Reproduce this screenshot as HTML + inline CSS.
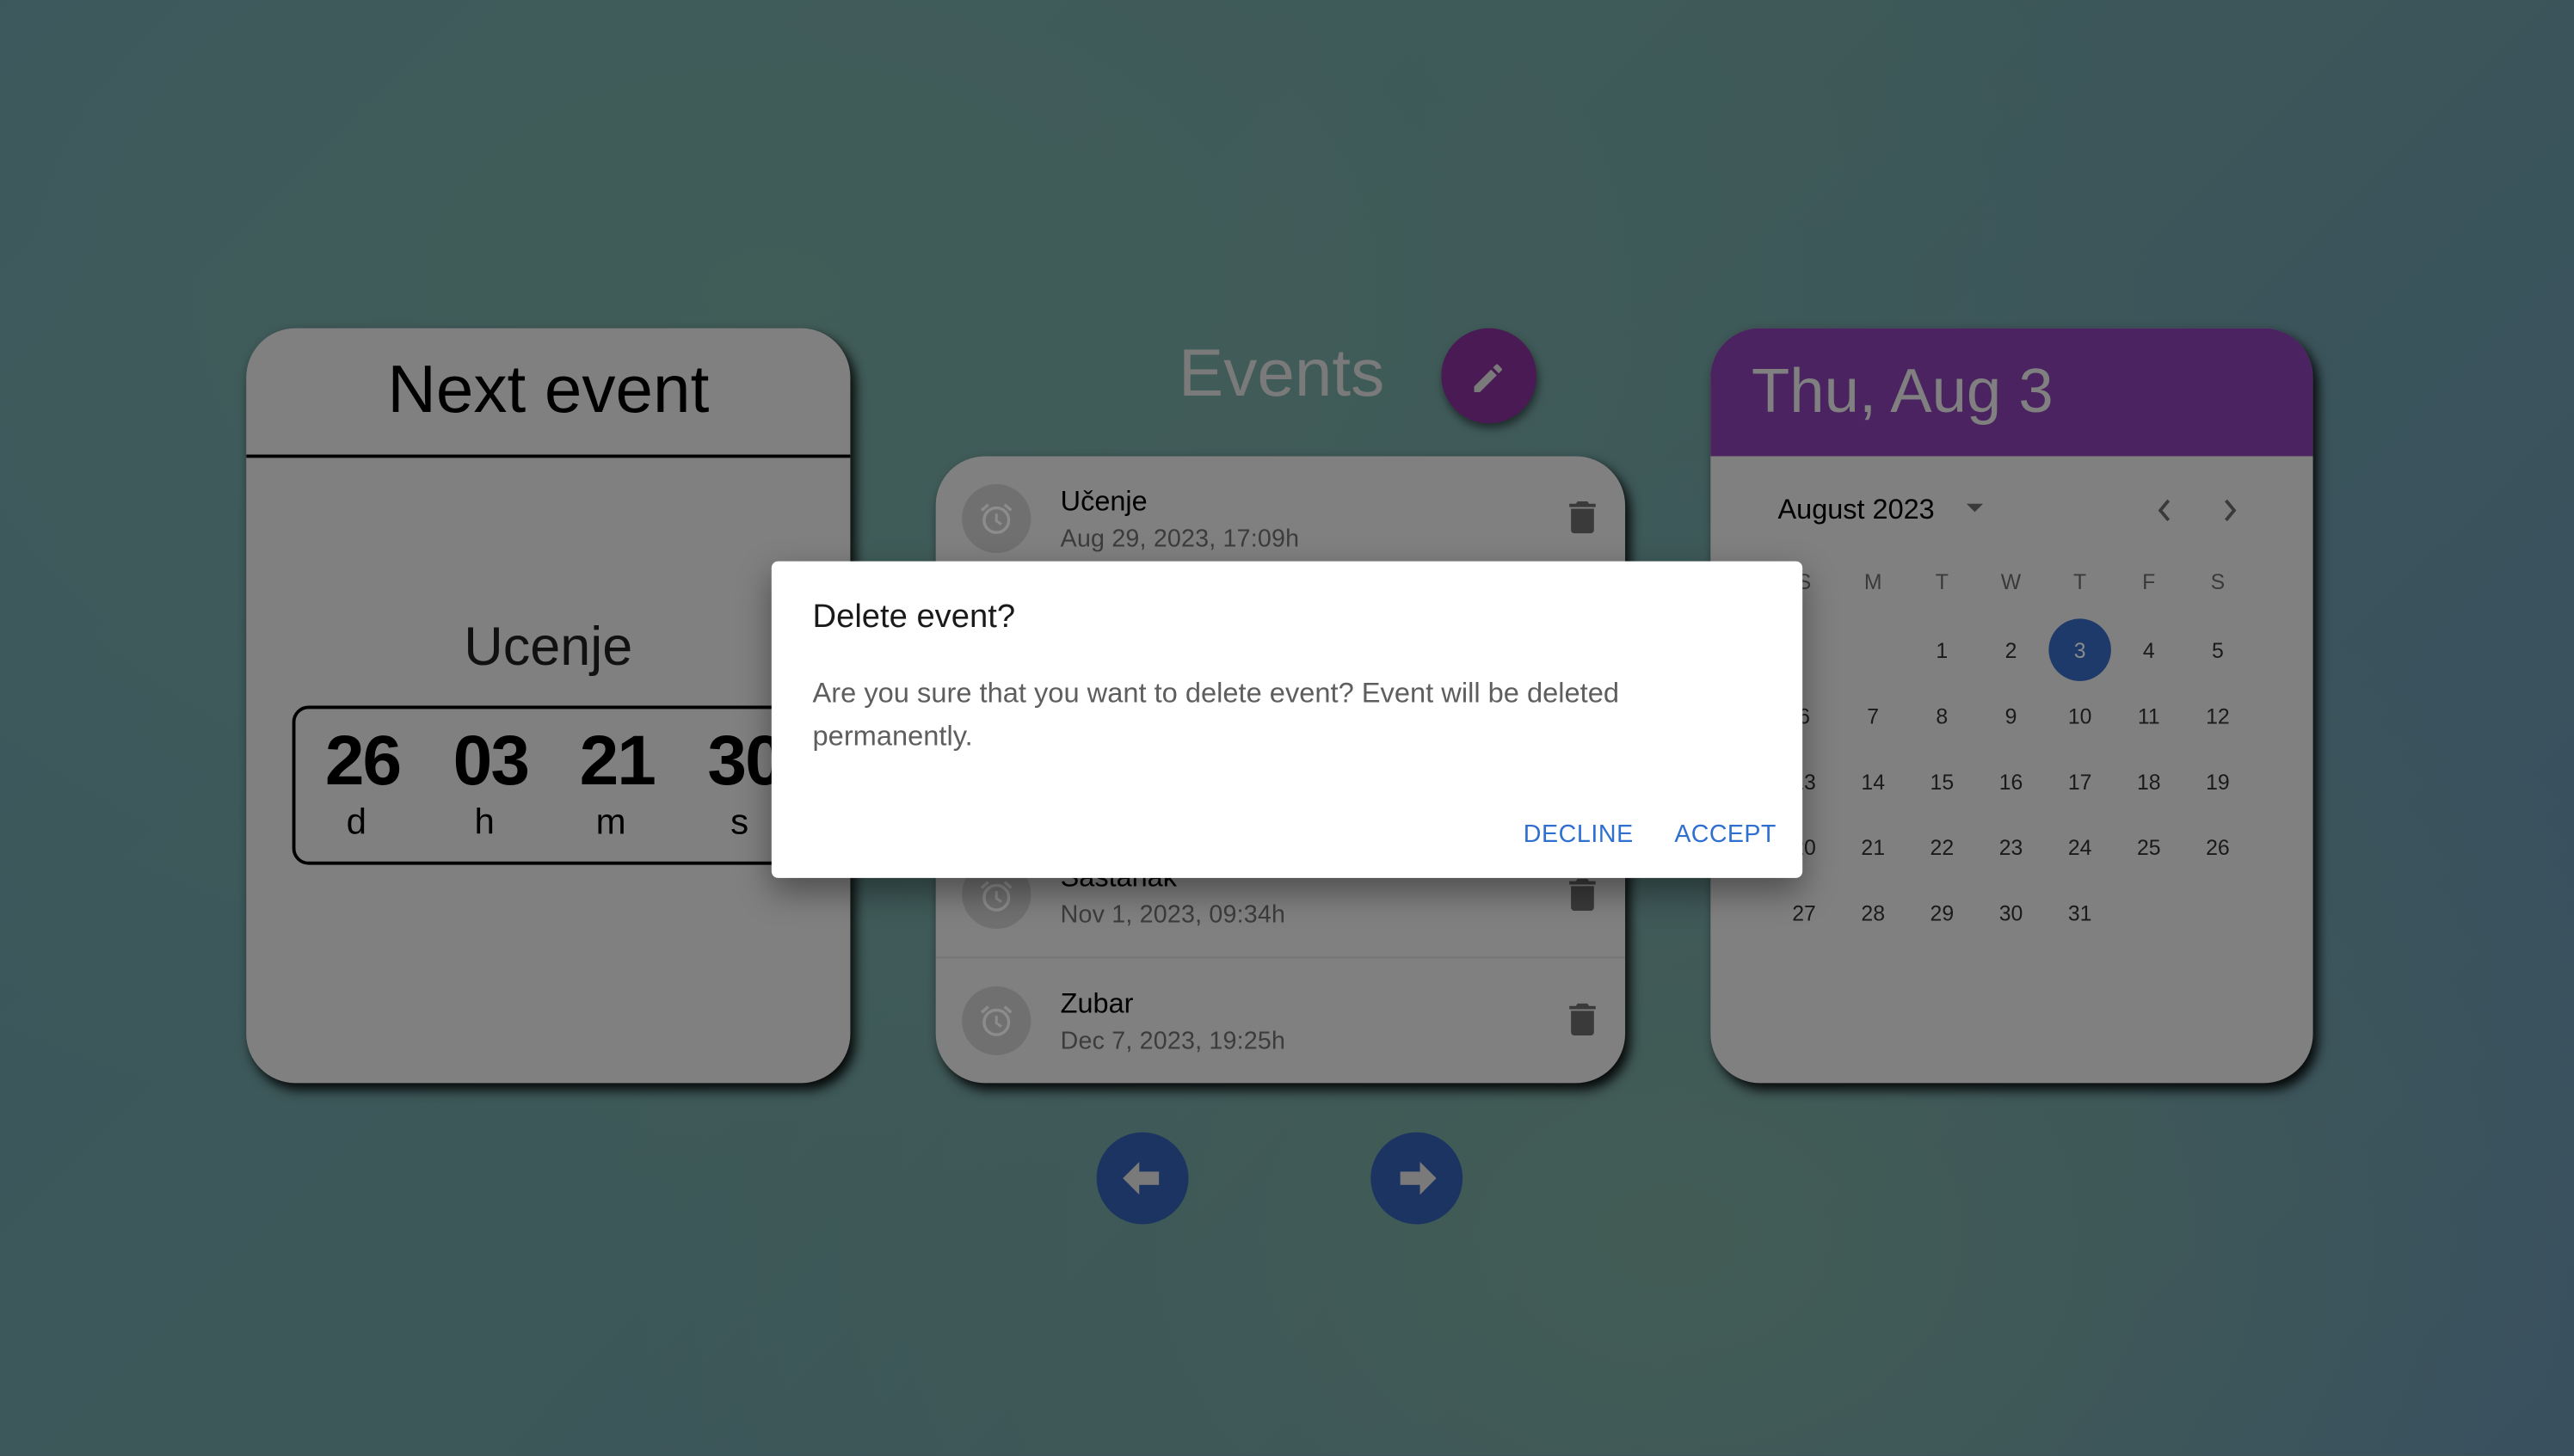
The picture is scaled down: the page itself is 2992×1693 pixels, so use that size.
<!DOCTYPE html>
<html><head><meta charset="utf-8"><style>
html,body{margin:0;padding:0;width:2992px;height:1692px;overflow:hidden;}
body{background:#3d5559;font-family:"Liberation Sans",sans-serif;}
#bg{position:absolute;left:0;top:0;width:2992px;height:1692px;
background:radial-gradient(ellipse at 30% 20%,#415d58 0%,rgba(65,93,88,0) 55%),radial-gradient(ellipse at 65% 85%,#425c55 0%,rgba(66,92,85,0) 45%),linear-gradient(135deg,#3a5660 0%,#3d5858 45%,#374e60 100%);}
#w{position:absolute;left:0;top:0;width:1568px;height:887px;transform:scale(1.90816);transform-origin:0 0;}
.card{position:absolute;background:#808080;border-radius:30px;box-shadow:3px 4px 7px rgba(0,0,0,.9);overflow:hidden;}
.abs{position:absolute;white-space:nowrap;}
.row{position:absolute;left:0;width:420px;height:76px;}
.av{position:absolute;left:16px;top:17px;width:42px;height:42px;border-radius:50%;background:#707070;}
.rt{position:absolute;left:76px;top:18px;font-size:17px;color:#000;}
.rd{position:absolute;left:76px;top:42px;font-size:15px;color:#3c3c3c;letter-spacing:.1px;}
.cal span{position:absolute;width:40px;text-align:center;font-size:13px;color:#1a1a1a;}
</style></head><body><div id="bg"></div>
<div id="w">
<div class="card" style="left:150px;top:200px;width:368px;height:460px;">
 <div class="abs" style="left:0;width:368px;text-align:center;top:14px;font-size:41px;color:#000;">Next event</div>
 <div class="abs" style="left:0;top:77px;width:368px;height:2px;background:#000;"></div>
 <div class="abs" style="left:0;width:368px;text-align:center;top:175px;font-size:33px;color:#111;">Ucenje</div>
 <div class="abs" style="left:28px;top:230px;width:340px;height:93px;border:2px solid #000;border-radius:10px;"></div>
 <div class="abs" style="left:48px;top:240px;font-size:43px;font-weight:bold;color:#000;letter-spacing:-1px;">26</div>
 <div class="abs" style="left:126px;top:240px;font-size:43px;font-weight:bold;color:#000;letter-spacing:-1px;">03</div>
 <div class="abs" style="left:203px;top:240px;font-size:43px;font-weight:bold;color:#000;letter-spacing:-1px;">21</div>
 <div class="abs" style="left:281px;top:240px;font-size:43px;font-weight:bold;color:#000;letter-spacing:-1px;">30</div>
 <div class="abs" style="left:61px;top:288px;font-size:22px;color:#000;">d</div>
 <div class="abs" style="left:139px;top:288px;font-size:22px;color:#000;">h</div>
 <div class="abs" style="left:213px;top:288px;font-size:22px;color:#000;">m</div>
 <div class="abs" style="left:295px;top:288px;font-size:22px;color:#000;">s</div>
</div>
<div class="abs" style="left:718px;top:204px;font-size:41px;color:#7a7a7a;">Events</div>
<div class="abs" style="left:878px;top:200px;width:58px;height:58px;border-radius:50%;background:#4a1a55;box-shadow:1px 3px 5px rgba(0,0,0,.5);">
 <svg width="58" height="58" viewBox="0 0 58 58"><path d="M20 35.5V39h3.5l10.3-10.3-3.5-3.5zM36.7 25.8a1 1 0 000-1.4l-2.1-2.1a1 1 0 00-1.4 0l-1.7 1.7 3.5 3.5z" fill="#7a7a7a"/></svg>
</div>
<div class="card" style="left:570px;top:278px;width:420px;height:382px;">
 <div class="row" style="top:0"><div class="av"></div><div class="rt">Učenje</div><div class="rd">Aug 29, 2023, 17:09h</div></div>
 <div class="row" style="top:76px"><div class="av"></div></div>
 <div class="row" style="top:153px"><div class="av"></div></div>
 <div class="row" style="top:229px"><div class="av"></div><div class="rt">Sastanak</div><div class="rd">Nov 1, 2023, 09:34h</div></div>
 <div class="abs" style="left:0;top:305px;width:420px;height:1px;background:#767676;"></div>
 <div class="row" style="top:306px"><div class="av"></div><div class="rt">Zubar</div><div class="rd">Dec 7, 2023, 19:25h</div></div>
</div>
<svg class="abs" style="left:570px;top:278px;" width="420" height="382" viewBox="0 0 420 382">
 <defs><g id="al"><circle cx="0" cy="1" r="7.5" fill="none" stroke="#8c8c8c" stroke-width="1.8"/><path d="M0-3v4.5l3 2" fill="none" stroke="#8c8c8c" stroke-width="1.6"/><path d="M-9-5l4-3.5M9-5l-4-3.5" stroke="#8c8c8c" stroke-width="1.8"/></g>
 <g id="tb"><path d="M-7-6h14v13a2 2 0 01-2 2h-10a2 2 0 01-2-2z M-8-9h4l1-1.5h6l1 1.5h4v2h-16z" fill="#3a3a3a"/></g></defs>
 <use href="#al" x="37" y="38"/><use href="#al" x="37" y="268"/><use href="#al" x="37" y="344"/>
 <use href="#tb" x="394" y="38"/><use href="#tb" x="394" y="268"/><use href="#tb" x="394" y="344"/>
</svg>
<div class="abs" style="left:668px;top:690px;width:56px;height:56px;border-radius:50%;background:#1c3461;">
 <svg width="56" height="56" viewBox="0 0 56 56"><path d="M16 28l10-10v6h12v8H26v6z" fill="#7a7a7a"/></svg></div>
<div class="abs" style="left:835px;top:690px;width:56px;height:56px;border-radius:50%;background:#1c3461;">
 <svg width="56" height="56" viewBox="0 0 56 56"><path d="M40 28L30 18v6H18v8h12v6z" fill="#7a7a7a"/></svg></div>
<div class="card cal" style="left:1042px;top:200px;width:367px;height:460px;">
 <div class="abs" style="left:0;top:0;width:367px;height:78px;background:#4a2360;"></div>
 <div class="abs" style="left:25px;top:18px;font-size:38px;color:#808080;">Thu, Aug 3</div>
 <div class="abs" style="left:41px;top:101px;font-size:17px;color:#000;">August 2023</div>
 <svg class="abs" style="left:150px;top:100px" width="200" height="22"><path d="M6 7h10l-5 5z" fill="#3a3a3a"/><path d="M129 5l-5 6 5 6" fill="none" stroke="#3a3a3a" stroke-width="2"/><path d="M164 5l5 6-5 6" fill="none" stroke="#3a3a3a" stroke-width="2"/></svg>
 <div class="abs" style="left:206px;top:177px;width:38px;height:38px;border-radius:50%;background:#1e3a6b;"></div>
 <span style="left:37px;top:147px;color:#3a3a3a">S</span><span style="left:79px;top:147px;color:#3a3a3a">M</span><span style="left:121px;top:147px;color:#3a3a3a">T</span><span style="left:163px;top:147px;color:#3a3a3a">W</span><span style="left:205px;top:147px;color:#3a3a3a">T</span><span style="left:247px;top:147px;color:#3a3a3a">F</span><span style="left:289px;top:147px;color:#3a3a3a">S</span>
 <span style="left:121px;top:189px">1</span><span style="left:163px;top:189px">2</span><span style="left:205px;top:189px;color:#8a8a8a">3</span><span style="left:247px;top:189px">4</span><span style="left:289px;top:189px">5</span>
 <span style="left:37px;top:229px">6</span><span style="left:79px;top:229px">7</span><span style="left:121px;top:229px">8</span><span style="left:163px;top:229px">9</span><span style="left:205px;top:229px">10</span><span style="left:247px;top:229px">11</span><span style="left:289px;top:229px">12</span>
 <span style="left:37px;top:269px">13</span><span style="left:79px;top:269px">14</span><span style="left:121px;top:269px">15</span><span style="left:163px;top:269px">16</span><span style="left:205px;top:269px">17</span><span style="left:247px;top:269px">18</span><span style="left:289px;top:269px">19</span>
 <span style="left:37px;top:309px">20</span><span style="left:79px;top:309px">21</span><span style="left:121px;top:309px">22</span><span style="left:163px;top:309px">23</span><span style="left:205px;top:309px">24</span><span style="left:247px;top:309px">25</span><span style="left:289px;top:309px">26</span>
 <span style="left:37px;top:349px">27</span><span style="left:79px;top:349px">28</span><span style="left:121px;top:349px">29</span><span style="left:163px;top:349px">30</span><span style="left:205px;top:349px">31</span>
</div>
<div class="abs" style="left:470px;top:342px;width:628px;height:193px;background:#fff;border-radius:4px;box-shadow:0 8px 20px rgba(0,0,0,.4);">
 <div class="abs" style="left:25px;top:23px;font-size:20px;color:#1a1a1a;">Delete event?</div>
 <div class="abs" style="left:25px;top:68px;font-size:17.1px;color:#5e5e5e;line-height:25.5px;white-space:normal;width:580px;">Are you sure that you want to delete event? Event will be deleted<br>permanently.</div>
 <div class="abs" style="left:458px;top:158px;font-size:15px;color:#2f6fd0;letter-spacing:.3px;">DECLINE</div>
 <div class="abs" style="left:550px;top:158px;font-size:15px;color:#2f6fd0;letter-spacing:.2px;">ACCEPT</div>
</div>
</div>
</body></html>
